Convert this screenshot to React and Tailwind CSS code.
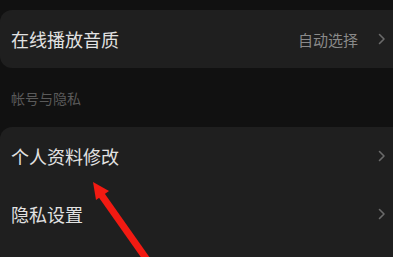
import React from 'react';

const font = { fontFamily: '"Noto Sans CJK SC", "Noto Sans", sans-serif' };

function Chevron() {
  return (
    <svg width="8" height="12" viewBox="0 0 8 12" className="shrink-0">
      <path d="M1.5 1.5 L6 6 L1.5 10.5" fill="none" stroke="#6a6a6a" strokeWidth="1.6" strokeLinecap="round" strokeLinejoin="round" />
    </svg>
  );
}

function Row({ label, value }) {
  return (
    <div className="flex items-center h-[58px] pl-[11px] pr-[7px]">
      <span className="flex-1 text-[18px] text-[#e2e2e2] leading-none">{label}</span>
      {value && <span className="text-[15px] text-[#8a8a8a] leading-none mr-[20px]">{value}</span>}
      <Chevron />
    </div>
  );
}

export default function App() {
  return (
    <div className="relative w-[393px] h-[257px] overflow-hidden bg-[#111111]" style={font}>
      <div className="pt-[10px]">
        <div className="rounded-[12px] bg-[#1f1f1f] mr-[-12px]">
          <div className="pr-[12px]">
            <Row label="在线播放音质" value="自动选择" />
          </div>
        </div>

        <div className="h-[59px] flex items-center pl-[11px]">
          <span className="text-[14px] text-[#5a5a5a] leading-none">帐号与隐私</span>
        </div>

        <div className="rounded-[12px] bg-[#1f1f1f] mr-[-12px] h-[140px]">
          <div className="pr-[12px]">
            <Row label="个人资料修改" />
            <Row label="隐私设置" />
          </div>
        </div>
      </div>

      {/* red annotation arrow */}
      <svg className="absolute left-0 top-0 pointer-events-none" width="393" height="257" viewBox="0 0 393 257">
        <line x1="100" y1="193" x2="150" y2="264" stroke="#f21a12" strokeWidth="7" />
        <polygon points="93,182 109,191 96,200" fill="#f21a12" />
      </svg>
    </div>
  );
}
